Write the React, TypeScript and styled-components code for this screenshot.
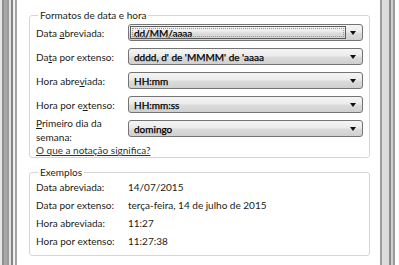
import React from "react";
import styled, { createGlobalStyle } from "styled-components";

const Global = createGlobalStyle`
  html, body { margin: 0; padding: 0; background: #fff; }
  body { font-family: "Lato", "Liberation Sans", sans-serif; font-size: 10px; color: #1a1a1a; }
`;

const Page = styled.div`
  display: flex;
  width: 399px;
  height: 265px;
  overflow: hidden;
  background: #fff;
`;

const LeftEdge = styled.div`
  width: 29px;
  flex: none;
  background: linear-gradient(
    to right,
    #e6e6e6 0 2px,
    #8f8f8f 2px 4px,
    #a8a8a8 4px 7px,
    #9a9a9a 7px 9px,
    #e2e2e2 9px 11px,
    #858585 11px 13px,
    #f2f2f2 13px 15px,
    #a4a4a4 15px 17px,
    #ffffff 17px
  );
`;

const RightEdge = styled.div`
  width: 29px;
  flex: none;
  background: linear-gradient(
    to right,
    #ffffff 0 10px,
    #9c9c9c 10px 12px,
    #dcdcdc 12px 19px,
    #8c8c8c 19px 21px,
    #cfcfcf 21px 23px,
    #9a9a9a 23px 25px,
    #ffffff 25px
  );
`;

const Main = styled.div`
  width: 341px;
  flex: none;
  display: flex;
  flex-direction: column;
  gap: 8px;
  padding-top: 9px;
`;

const GroupBox = styled.fieldset<{ $h: number; $pt: number }>`
  margin: 0;
  padding: ${(p) => p.$pt}px 6px 0 6px;
  height: ${(p) => p.$h}px;
  box-sizing: border-box;
  border: 1px solid #d6d6d6;
  border-radius: 3px;
  min-width: 0;
`;

const Legend = styled.legend`
  padding: 0 2px;
  margin-left: 2px;
  font-size: 10px;
  line-height: 12px;
  color: #1a1a1a;
`;

const FormGrid = styled.div`
  display: grid;
  grid-template-columns: 92px 1fr;
  grid-auto-rows: 17px;
  row-gap: 7px;
  align-items: center;
`;

const Label = styled.div`
  font-size: 10px;
  line-height: 12px;
  color: #1a1a1a;
  white-space: nowrap;
`;

const Key = styled.span`
  text-decoration: underline;
`;

const Combo = styled.div`
  position: relative;
  height: 17px;
  box-sizing: border-box;
  border: 1px solid #747474;
  border-radius: 3px;
  background: linear-gradient(#f5f5f5 0%, #ebebeb 45%, #dcdcdc 55%, #d0d0d0 100%);
  display: flex;
  align-items: center;
  padding: 0 16px 0 1px;
  font-size: 10px;
  color: #000;
  -webkit-text-stroke: 0.25px #000;
`;

const ComboText = styled.span<{ $focus?: boolean }>`
  flex: 1;
  height: 13px;
  line-height: 12px;
  box-sizing: border-box;
  padding-left: 3px;
  border: 1px ${(p) => (p.$focus ? "solid #5a5a5a" : "solid transparent")};
  ${(p) => (p.$focus ? "outline: 1px dotted #9a9a9a; outline-offset: -3px;" : "")}
  white-space: pre;
`;

const Arrow = styled.span`
  position: absolute;
  right: 6px;
  top: 6px;
  width: 0;
  height: 0;
  border-left: 3px solid transparent;
  border-right: 3px solid transparent;
  border-top: 4px solid #111;
`;

const TwoLine = styled(Label)`
  align-self: start;
  margin-top: -4px;
  display: flex;
  flex-direction: column;
`;

const LabelLine = styled.span`
  display: block;
  line-height: 14px;
`;

const LinkText = styled.a`
  display: block;
  margin-top: 7px;
  font-size: 10px;
  line-height: 12px;
  color: #333;
  text-decoration: underline;
  cursor: pointer;
`;

const ExGrid = styled.div`
  display: grid;
  grid-template-columns: 92px 1fr;
  grid-auto-rows: 18px;
  align-items: center;
`;

const Value = styled.div`
  font-size: 10px;
  line-height: 12px;
  color: #1a1a1a;
  white-space: nowrap;
`;

const formats: { label: React.ReactNode; value: string; focus?: boolean }[] = [
  { label: <>Data <Key>a</Key>breviada:</>, value: "dd/MM/aaaa", focus: true },
  { label: <>Da<Key>t</Key>a por extenso:</>, value: "dddd, d' de 'MMMM' de 'aaaa" },
  { label: <>Hora abre<Key>v</Key>iada:</>, value: "HH:mm" },
  { label: <>Hora por e<Key>x</Key>tenso:</>, value: "HH:mm:ss" },
];

const examples = [
  ["Data abreviada:", "14/07/2015"],
  ["Data por extenso:", "terça-feira, 14 de julho de 2015"],
  ["Hora abreviada:", "11:27"],
  ["Hora por extenso:", "11:27:38"],
];

export default function App() {
  return (
    <>
      <Global />
      <Page>
        <LeftEdge />
        <Main>
          <GroupBox $h={149} $pt={3}>
            <Legend>Formatos de data e hora</Legend>
            <FormGrid>
              {formats.map((f, i) => (
                <React.Fragment key={i}>
                  <Label>{f.label}</Label>
                  <Combo>
                    <ComboText $focus={f.focus}>{f.value}</ComboText>
                    <Arrow />
                  </Combo>
                </React.Fragment>
              ))}
              <TwoLine>
                <LabelLine>
                  <Key>P</Key>rimeiro dia da
                </LabelLine>
                <LabelLine>semana:</LabelLine>
              </TwoLine>
              <Combo>
                <ComboText>domingo</ComboText>
                <Arrow />
              </Combo>
            </FormGrid>
            <LinkText>O que a notação significa?</LinkText>
          </GroupBox>
          <GroupBox $h={90} $pt={0}>
            <Legend>Exemplos</Legend>
            <ExGrid>
              {examples.map(([l, v]) => (
                <React.Fragment key={l}>
                  <Label>{l}</Label>
                  <Value>{v}</Value>
                </React.Fragment>
              ))}
            </ExGrid>
          </GroupBox>
        </Main>
        <RightEdge />
      </Page>
    </>
  );
}
